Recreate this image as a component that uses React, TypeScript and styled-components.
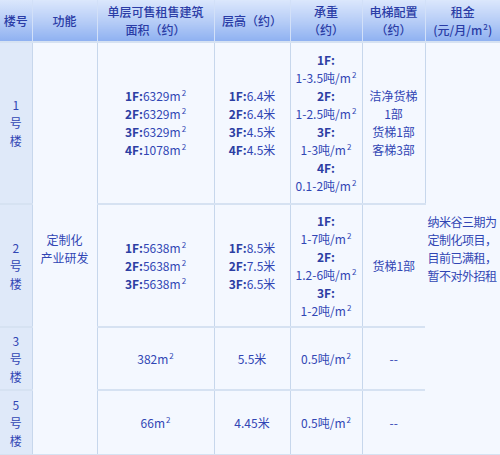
import React from "react";
import styled, { createGlobalStyle } from "styled-components";

const GlobalStyle = createGlobalStyle`
  html, body {
    margin: 0;
    padding: 0;
    background: #ffffff;
  }
  body {
    font-family: "Noto Sans CJK SC", "Noto Sans", sans-serif;
  }
`;

const Table = styled.table`
  width: 500px;
  table-layout: fixed;
  border-collapse: collapse;
  font-size: 12px;
  line-height: 18px;
  color: #3146b4;
`;

const HeadCell = styled.th`
  height: 41px;
  padding: 0;
  font-weight: 500;
  color: #2a3ca6;
  text-align: center;
  vertical-align: middle;
  white-space: nowrap;
  background: linear-gradient(180deg, #dbe7fc 0%, #b4cbf6 55%, #8fb1f1 100%);
  border-right: 1px solid #d2e0f8;
  border-bottom: 2px solid #d6e2f2;
  &:last-child {
    border-right: none;
  }
`;

const Cell = styled.td<{ $h?: number; $side?: boolean }>`
  height: ${(p) => (p.$h ? `${p.$h}px` : "auto")};
  padding: 0;
  text-align: center;
  vertical-align: middle;
  white-space: nowrap;
  background: ${(p) => (p.$side ? "#dfe9f9" : "#f4f8ff")};
  border-right: 1px solid #c7d7ec;
  border-bottom: 2px solid #d6e2f2;
  &:last-child {
    border-right: none;
  }
`;

const RentCell = styled(Cell)`
  text-align: left;
  padding: 0 0 0 2px;
  letter-spacing: -0.5px;
`;

const Label = styled.b`
  font-weight: 700;
  color: #2c3ea3;
`;

const Sup = styled.span`
  font-size: 8px;
  line-height: 0;
  vertical-align: 5px;
  margin-left: 1px;
`;

const Line = styled.div``;

const Sq = () => (
  <>
    m<Sup>2</Sup>
  </>
);

const floors = (items: [string, React.ReactNode][]) =>
  items.map(([f, v]) => (
    <Line key={f}>
      <Label>{f}:</Label>
      {v}
    </Line>
  ));

const loads = (items: [string, string][]) =>
  items.map(([f, v]) => (
    <React.Fragment key={f}>
      <Line>
        <Label>{f}:</Label>
      </Line>
      <Line>
        {v}吨/<Sq />
      </Line>
    </React.Fragment>
  ));

export default function App() {
  return (
    <>
      <GlobalStyle />
      <Table>
        <colgroup>
          <col style={{ width: 32 }} />
          <col style={{ width: 65 }} />
          <col style={{ width: 117 }} />
          <col style={{ width: 76 }} />
          <col style={{ width: 72 }} />
          <col style={{ width: 63 }} />
          <col style={{ width: 75 }} />
        </colgroup>
        <thead>
          <tr>
            <HeadCell>楼号</HeadCell>
            <HeadCell>功能</HeadCell>
            <HeadCell>
              单层可售租售建筑
              <br />
              面积（约）
            </HeadCell>
            <HeadCell>层高（约）</HeadCell>
            <HeadCell>
              承重
              <br />
              （约）
            </HeadCell>
            <HeadCell>
              电梯配置
              <br />
              （约）
            </HeadCell>
            <HeadCell>
              租金
              <br />
              (元/月/<Sq />)
            </HeadCell>
          </tr>
        </thead>
        <tbody>
          <tr>
            <Cell $side $h={160}>
              1<br />号<br />楼
            </Cell>
            <Cell rowSpan={4}>
              定制化
              <br />
              产业研发
            </Cell>
            <Cell>
              {floors([
                ["1F", <>6329<Sq /></>],
                ["2F", <>6329<Sq /></>],
                ["3F", <>6329<Sq /></>],
                ["4F", <>1078<Sq /></>],
              ])}
            </Cell>
            <Cell>
              {floors([
                ["1F", "6.4米"],
                ["2F", "6.4米"],
                ["3F", "4.5米"],
                ["4F", "4.5米"],
              ])}
            </Cell>
            <Cell>
              {loads([
                ["1F", "1-3.5"],
                ["2F", "1-2.5"],
                ["3F", "1-3"],
                ["4F", "0.1-2"],
              ])}
            </Cell>
            <Cell>
              洁净货梯
              <br />
              1部
              <br />
              货梯1部
              <br />
              客梯3部
            </Cell>
            <RentCell rowSpan={4}>
              纳米谷三期为
              <br />
              定制化项目，
              <br />
              目前已满租，
              <br />
              暂不对外招租
            </RentCell>
          </tr>
          <tr>
            <Cell $side $h={121}>
              2<br />号<br />楼
            </Cell>
            <Cell>
              {floors([
                ["1F", <>5638<Sq /></>],
                ["2F", <>5638<Sq /></>],
                ["3F", <>5638<Sq /></>],
              ])}
            </Cell>
            <Cell>
              {floors([
                ["1F", "8.5米"],
                ["2F", "7.5米"],
                ["3F", "6.5米"],
              ])}
            </Cell>
            <Cell>
              {loads([
                ["1F", "1-7"],
                ["2F", "1.2-6"],
                ["3F", "1-2"],
              ])}
            </Cell>
            <Cell>货梯1部</Cell>
          </tr>
          <tr>
            <Cell $side $h={61}>
              3<br />号<br />楼
            </Cell>
            <Cell>
              382<Sq />
            </Cell>
            <Cell>5.5米</Cell>
            <Cell>
              0.5吨/<Sq />
            </Cell>
            <Cell>--</Cell>
          </tr>
          <tr>
            <Cell $side $h={63}>
              5<br />号<br />楼
            </Cell>
            <Cell>
              66<Sq />
            </Cell>
            <Cell>4.45米</Cell>
            <Cell>
              0.5吨/<Sq />
            </Cell>
            <Cell>--</Cell>
          </tr>
        </tbody>
      </Table>
    </>
  );
}
